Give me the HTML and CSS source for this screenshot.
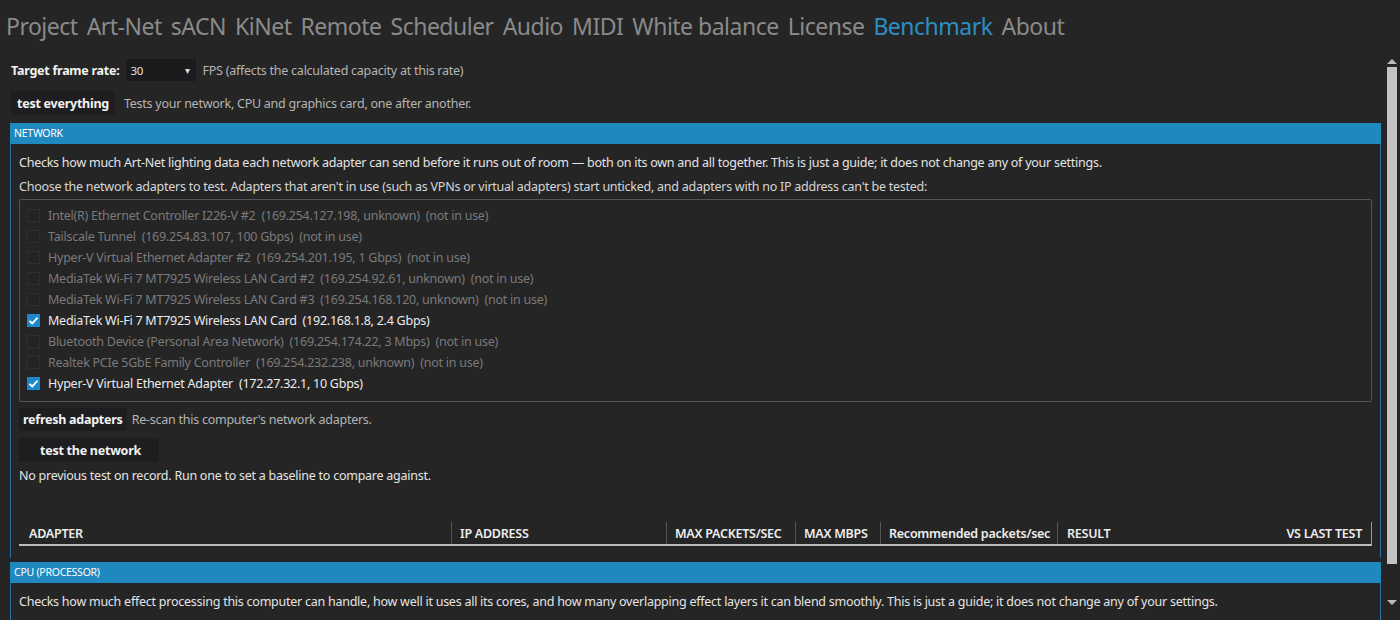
FILE: index.html
```html
<!DOCTYPE html>
<html lang="en">
<head>
    <meta charset="UTF-8">
    <title>Benchmark</title>
    <link rel="stylesheet" href="styles.css">
</head>
<body>

    <!-- Tabs -->
    <div class="tabs">
        <span class="tab">Project</span>
        <span class="tab">Art-Net</span>
        <span class="tab">sACN</span>
        <span class="tab">KiNet</span>
        <span class="tab">Remote</span>
        <span class="tab">Scheduler</span>
        <span class="tab">Audio</span>
        <span class="tab">MIDI</span>
        <span class="tab">White balance</span>
        <span class="tab">License</span>
        <span class="tab ativa">Benchmark</span>
        <span class="tab">About</span>
    </div>

    <div class="area">
        <div class="conteudo">

            <div class="linha linha-fps">
                <span class="rotulo">Target frame rate:</span>
                <div class="combo">
                    <span>30</span>
                    <span class="seta">&#9662;</span>
                </div>
                <span class="dica">FPS (affects the calculated capacity at this rate)</span>
            </div>

            <div class="linha linha-tudo">
                <button class="botao">test everything</button>
                <span class="dica">Tests your network, CPU and graphics card, one after another.</span>
            </div>

            <!-- Network -->
            <div class="secao">
                <div class="secao-titulo">NETWORK</div>
                <div class="secao-corpo">
                    <p class="texto">Checks how much Art-Net lighting data each network adapter can send before it runs out of room — both on its own and all together. This is just a guide; it does not change any of your settings.</p>
                    <p class="texto texto-2">Choose the network adapters to test. Adapters that aren't in use (such as VPNs or virtual adapters) start unticked, and adapters with no IP address can't be tested:</p>

                    <div class="lista">
                        <div class="item off"><span class="caixa"></span>Intel(R) Ethernet Controller I226-V #2&nbsp; (169.254.127.198, unknown)&nbsp; (not in use)</div>
                        <div class="item off"><span class="caixa"></span>Tailscale Tunnel&nbsp; (169.254.83.107, 100 Gbps)&nbsp; (not in use)</div>
                        <div class="item off"><span class="caixa"></span>Hyper-V Virtual Ethernet Adapter #2&nbsp; (169.254.201.195, 1 Gbps)&nbsp; (not in use)</div>
                        <div class="item off"><span class="caixa"></span>MediaTek Wi-Fi 7 MT7925 Wireless LAN Card #2&nbsp; (169.254.92.61, unknown)&nbsp; (not in use)</div>
                        <div class="item off"><span class="caixa"></span>MediaTek Wi-Fi 7 MT7925 Wireless LAN Card #3&nbsp; (169.254.168.120, unknown)&nbsp; (not in use)</div>
                        <div class="item"><span class="caixa marcada"><svg width="13" height="13" viewBox="0 0 13 13"><path d="M2.5 6.8 L5.2 9.4 L10.6 3.6" fill="none" stroke="#fff" stroke-width="1.8"/></svg></span>MediaTek Wi-Fi 7 MT7925 Wireless LAN Card&nbsp; (192.168.1.8, 2.4 Gbps)</div>
                        <div class="item off"><span class="caixa"></span>Bluetooth Device (Personal Area Network)&nbsp; (169.254.174.22, 3 Mbps)&nbsp; (not in use)</div>
                        <div class="item off"><span class="caixa"></span>Realtek PCIe 5GbE Family Controller&nbsp; (169.254.232.238, unknown)&nbsp; (not in use)</div>
                        <div class="item"><span class="caixa marcada"><svg width="13" height="13" viewBox="0 0 13 13"><path d="M2.5 6.8 L5.2 9.4 L10.6 3.6" fill="none" stroke="#fff" stroke-width="1.8"/></svg></span>Hyper-V Virtual Ethernet Adapter&nbsp; (172.27.32.1, 10 Gbps)</div>
                    </div>

                    <div class="linha linha-refresh">
                        <button class="botao">refresh adapters</button>
                        <span class="dica">Re-scan this computer's network adapters.</span>
                    </div>

                    <button class="botao botao-rede">test the network</button>

                    <p class="texto texto-vazio">No previous test on record. Run one to set a baseline to compare against.</p>

                    <div class="tabela-cab">
                        <div class="col c1">ADAPTER</div>
                        <div class="col c2">IP ADDRESS</div>
                        <div class="col c3">MAX PACKETS/SEC</div>
                        <div class="col c4">MAX MBPS</div>
                        <div class="col c5">Recommended packets/sec</div>
                        <div class="col c6"><span>RESULT</span><span>VS LAST TEST</span></div>
                    </div>
                </div>
            </div>

            <!-- CPU -->
            <div class="secao">
                <div class="secao-titulo">CPU (PROCESSOR)</div>
                <div class="secao-corpo">
                    <p class="texto texto-cpu">Checks how much effect processing this computer can handle, how well it uses all its cores, and how many overlapping effect layers it can blend smoothly. This is just a guide; it does not change any of your settings.</p>
                </div>
            </div>

        </div>

        <!-- Scrollbar -->
        <div class="rolagem">
            <div class="seta-cima"></div>
            <div class="polegar"></div>
            <div class="trilho"></div>
            <div class="seta-baixo"></div>
        </div>
    </div>

</body>
</html>
```

FILE: styles.css
```css
html, body {
    margin: 0;
    height: 620px;
    overflow: hidden;
}

body {
    background-color: #252525;
    color: #e6e6e6;
    font-family: "Noto Sans", "Open Sans", sans-serif;
    font-size: 12.5px;
    letter-spacing: -0.25px;
}

.tabs {
    height: 59px;
    box-sizing: border-box;
    padding: 9px 0 0 6px;
    display: flex;
    gap: 9px;
    font-size: 23px;
    letter-spacing: -0.5px;
    line-height: 34px;
    color: #8a8a8a;
    white-space: nowrap;
}

.tab.ativa {
    color: #2b8fc2;
}

.area {
    display: flex;
    height: 561px;
}

.conteudo {
    flex: 1;
    padding-left: 10px;
    padding-right: 3px;
    overflow: hidden;
}

.linha {
    display: flex;
    align-items: center;
}

.linha-fps {
    height: 22px;
    padding-left: 1px;
}

.rotulo {
    font-weight: bold;
    color: #f2f2f2;
}

.combo {
    margin-left: 6px;
    width: 70px;
    height: 22px;
    box-sizing: border-box;
    background-color: #1b1b1d;
    display: flex;
    align-items: center;
    justify-content: space-between;
    padding: 0 6px 0 5px;
    font-size: 11.5px;
    color: #e0e0e0;
}

.seta {
    font-size: 10px;
    color: #ddd;
}

.dica {
    margin-left: 7px;
    color: #b4b4b4;
}

.linha-tudo {
    margin-top: 10px;
    padding-left: 1px;
}

.botao {
    font-family: inherit;
    font-size: 12.5px;
    letter-spacing: -0.25px;
    font-weight: bold;
    color: #f2f2f2;
    background-color: #1e1e20;
    border: none;
    height: 24px;
    padding: 0 7px;
    cursor: pointer;
}

.linha-tudo .botao {
    padding: 0 6px;
}

.linha-tudo .dica {
    margin-left: 9px;
}

.secao {
    margin-top: 8px;
    border-left: 1px solid #2873a0;
    border-right: 1px solid #2873a0;
}

.secao + .secao {
    margin-top: 4px;
}

.secao-titulo {
    height: 21px;
    background-color: #1f88bf;
    color: #fff;
    font-size: 10.5px;
    line-height: 21px;
    padding-left: 4px;
    margin-left: -1px;
    margin-right: -1px;
}

.secao-corpo {
    padding: 9px 8px 12px 8px;
}

.texto {
    margin: 0;
    line-height: 20px;
    color: #e4e4e4;
}

.texto-2 {
    margin-top: 4px;
    color: #d6d6d6;
}

.lista {
    margin-top: 2px;
    border: 1px solid #555;
    border-radius: 2px;
    padding: 5px 0 7px 7px;
}

.item {
    height: 21px;
    display: flex;
    align-items: center;
    color: #ececec;
}

.item.off {
    color: #7a7a7a;
}

.caixa {
    width: 13px;
    height: 13px;
    box-sizing: border-box;
    background-color: #232323;
    border: 1px solid #2e2e2e;
    margin-right: 8px;
    display: flex;
}

.caixa.marcada {
    background-color: #1c88cb;
    border: none;
}

.linha-refresh {
    margin-top: 6px;
}

.linha-refresh .botao {
    height: 23px;
    padding: 0 4px;
}

.linha-refresh .dica {
    margin-left: 5px;
}

.botao-rede {
    display: block;
    margin-top: 7px;
    width: 140px;
    padding-left: 10px;
}

.texto-vazio {
    margin-top: 4px;
}

.tabela-cab {
    margin-top: 36px;
    display: grid;
    grid-template-columns: 432px 215px 129px 85px 177px 1fr;
    height: 22px;
    border-bottom: 2px solid #bdbdbd;
    border-right: 1px solid #9a9a9a;
    font-weight: 600;
    color: #eeeeee;
    white-space: nowrap;
}

.col {
    display: flex;
    align-items: center;
    padding-left: 8px;
    border-left: 1px solid #555;
    overflow: hidden;
}

.c1 {
    padding-left: 10px;
    border-left: none;
}

.c6 {
    justify-content: space-between;
    padding-right: 9px;
    padding-left: 9px;
}

.texto-cpu {
    margin-top: 0;
}

.rolagem {
    width: 16px;
    display: flex;
    flex-direction: column;
    align-items: center;
}

.seta-cima {
    width: 0;
    height: 0;
    border-left: 5px solid transparent;
    border-right: 5px solid transparent;
    border-bottom: 5px solid #bdbdbd;
}

.polegar {
    width: 10px;
    height: 497px;
    background-color: #c2c2c2;
    margin-top: 3px;
}

.trilho {
    flex: 1;
}

.seta-baixo {
    width: 0;
    height: 0;
    border-left: 5px solid transparent;
    border-right: 5px solid transparent;
    border-top: 5px solid #bdbdbd;
    margin-bottom: 15px;
}
```
